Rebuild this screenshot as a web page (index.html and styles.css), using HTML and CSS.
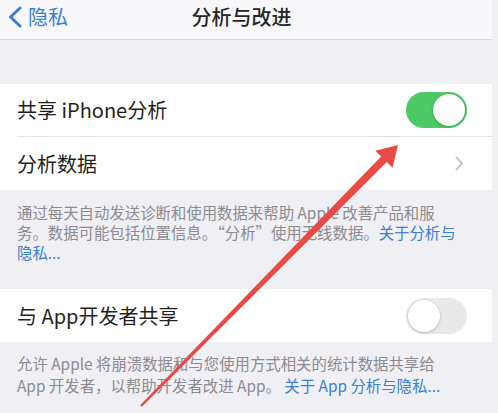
FILE: index.html
```html
<!DOCTYPE html>
<html lang="zh-CN">
<head>
<meta charset="utf-8">
<title>分析与改进</title>
<link rel="stylesheet" href="styles.css">
</head>
<body>
<div class="screen">
  <header class="nav">
    <div class="back">
      <svg class="back-icon" width="16" height="22" viewBox="0 0 16 22"><path d="M13 2 L3.5 11 L13 20" fill="none" stroke="#3a7fd5" stroke-width="3" stroke-linecap="round" stroke-linejoin="round"/></svg>
      <span class="back-text">隐私</span>
    </div>
    <div class="title">分析与改进</div>
    <div></div>
  </header>

  <section class="group first">
    <div class="row">
      <span class="label">共享 iPhone分析</span>
      <span class="toggle on"><span class="knob"></span></span>
    </div>
    <div class="sep"></div>
    <div class="row tall">
      <span class="label">分析数据</span>
      <svg class="chev" width="9" height="15" viewBox="0 0 9 15"><path d="M1.5 1.5 L7 7.5 L1.5 13.5" fill="none" stroke="#c5c5c9" stroke-width="2" stroke-linecap="round" stroke-linejoin="round"/></svg>
    </div>
  </section>
  <p class="note">通过每天自动发送诊断和使用数据来帮助 Apple 改善产品和服<br>务。数据可能包括位置信息。“分析”使用无线数据。<span class="link">关于分析与<br>隐私...</span></p>

  <section class="group">
    <div class="row tall">
      <span class="label">与 App开发者共享</span>
      <span class="toggle off"><span class="knob"></span></span>
    </div>
  </section>
  <p class="note second">允许 Apple 将崩溃数据和与您使用方式相关的统计数据共享给<br>App 开发者，以帮助开发者改进 App。 <span class="link">关于 App 分析与隐私...</span></p>

  <svg class="arrow" width="498" height="413" viewBox="0 0 498 413">
    <polygon points="141.9,406.8 386.8,162.1 392.5,167.7 398,145 375.4,150.8 381.1,156.4 140.1,405.2" fill="#ea4a43"/>
  </svg>
</div>
</body>
</html>
```
FILE: styles.css
```css
html, body {
  margin: 0;
  padding: 0;
}
body {
  background: #efeff4;
  font-family: "Noto Sans CJK SC", "Noto Sans", sans-serif;
  color: #1f1f21;
}
.screen {
  position: relative;
  width: 492px;
  height: 413px;
  overflow: visible;
}
.nav {
  height: 39px;
  border-bottom: 1px solid #dcdce0;
  background: #f8f8fa;
  display: grid;
  grid-template-columns: 1fr auto 1fr;
  align-items: center;
  padding-right: 9px;
}
.back {
  display: flex;
  align-items: center;
  gap: 5px;
  padding-left: 7px;
  margin-top: -6px;
}
.back-text {
  font-size: 20px;
  color: #3a7fd5;
  line-height: 24px;
}
.title {
  font-size: 20px;
  font-weight: 500;
  color: #262628;
  margin-top: -6px;
  line-height: 24px;
}
.group {
  background: #fff;
}
.group.first {
  margin-top: 44px;
}
.row {
  height: 52px;
  display: flex;
  align-items: center;
  justify-content: space-between;
  padding: 0 25px 0 17px;
}
.row.tall {
  height: 53px;
}
.label {
  font-size: 20px;
  line-height: 26px;
  color: #1f1f21;
}
.sep {
  height: 1px;
  margin-left: 17px;
  background: #e2e2e5;
}
.chev {
  margin-right: 3px;
}
.toggle {
  width: 61px;
  height: 36px;
  border-radius: 18px;
  display: flex;
  align-items: center;
  box-sizing: border-box;
  padding: 0 2px;
}
.toggle.on {
  background: #4cc864;
  justify-content: flex-end;
}
.toggle.off {
  background: #e9e9eb;
  justify-content: flex-start;
}
.knob {
  width: 32px;
  height: 32px;
  border-radius: 50%;
  background: #fff;
  box-shadow: 0 1px 3px rgba(0,0,0,0.18), 0 0 0 0.5px rgba(0,0,0,0.06);
}
.note {
  margin: 0;
  padding: 12px 17px 27px;
  font-size: 15.4px;
  line-height: 20px;
  color: #8b8b90;
  white-space: nowrap;
}
.note.second {
  padding-top: 10px;
  line-height: 22px;
}
.link {
  color: #3a7fd5;
}
.arrow {
  position: absolute;
  left: 0;
  top: 0;
  pointer-events: none;
}
```
